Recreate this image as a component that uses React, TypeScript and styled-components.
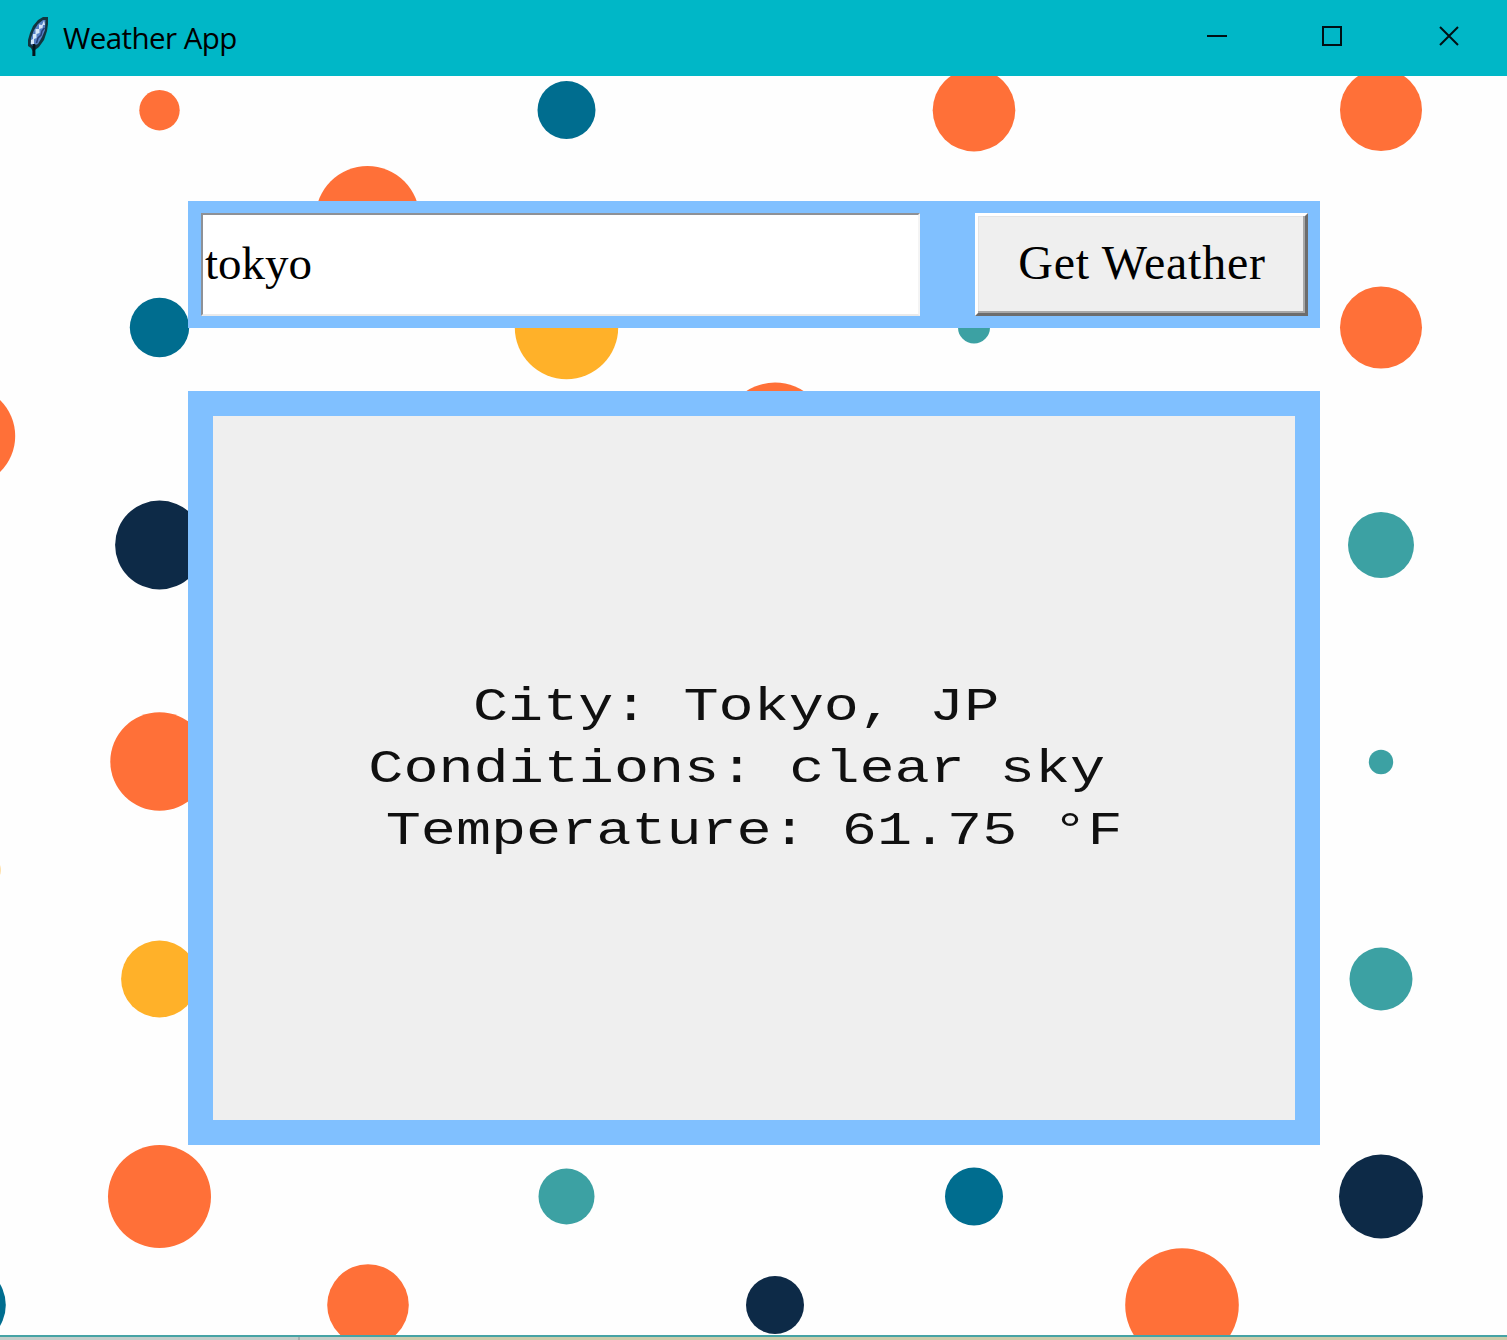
import React from 'react';
import styled, { createGlobalStyle } from 'styled-components';

const GlobalStyle = createGlobalStyle`
  *, *::before, *::after { box-sizing: border-box; }
  html, body { margin: 0; padding: 0; background: #fefefe; }
  body { overflow: hidden; }
`;

const Window = styled.div`
  display: flex;
  flex-direction: column;
  width: 1507px;
  height: 1340px;
  overflow: hidden;
`;

const TitleBar = styled.header`
  display: flex;
  align-items: center;
  flex: none;
  height: 76px;
  padding-left: 24px;
  background: #00b7c7;
`;

const FeatherIcon = styled.svg`
  flex: none;
  width: 27px;
  height: 44px;
  margin-right: 12px;
`;

const Title = styled.h1`
  flex: 1;
  margin: 0;
  font: 400 29.5px/40px 'Open Sans', 'Noto Sans', sans-serif;
  letter-spacing: -0.55px;
  color: #000;
`;

const WindowControls = styled.div`
  display: flex;
  align-self: stretch;
`;

const ControlButton = styled.button`
  display: flex;
  justify-content: center;
  width: 116px;
  padding: 25px 0 0;
  border: 0;
  background: transparent;
`;

const Glyph = styled.svg`
  width: 22px;
  height: 22px;
  fill: none;
  stroke: #001014;
  stroke-width: 2;
`;

const Canvas = styled.main`
  position: relative;
  display: flex;
  flex-direction: column;
  gap: 63px;
  flex: none;
  height: 1259px;
  padding: 125px 187px 0 188px;
  background: #fefefe;
`;

const DotPattern = styled.svg`
  position: absolute;
  inset: 0;
  width: 1507px;
  height: 1259px;
`;

const SearchFrame = styled.form`
  position: relative;
  display: flex;
  justify-content: space-between;
  flex: none;
  height: 127px;
  padding: 12px 12px 12px 13px;
  background: #80c0ff;
`;

const CityInput = styled.input`
  width: 719px;
  height: 103px;
  padding: 0 2px 3px;
  border: 2px solid;
  border-color: #8e9196 #f4f4f4 #eaeaea #8e9196;
  border-radius: 0;
  outline: 0;
  background: #fff;
  font: 400 47px 'Liberation Serif', 'Times New Roman', serif;
  color: #000;
`;

const WeatherButton = styled.button`
  width: 333px;
  height: 103px;
  padding: 0 0 4px 1px;
  border: 3px solid;
  border-color: #fff #6c6c6c #6c6c6c #fff;
  border-radius: 0;
  background: #efefef;
  box-shadow: inset -2px -2px #a8a8a8, inset 1px 1px #e4e4e4;
  font: 400 48px 'Liberation Serif', 'Times New Roman', serif;
  letter-spacing: 0.75px;
  white-space: nowrap;
  color: #000;
`;

const ResultFrame = styled.section`
  position: relative;
  display: flex;
  flex: none;
  height: 754px;
  padding: 25px;
  background: #80c0ff;
`;

const Result = styled.div`
  display: flex;
  flex: 1;
  flex-direction: column;
  align-items: center;
  justify-content: center;
  padding-top: 4px;
  background: #efefef;
`;

const ResultLine = styled.p`
  margin: 0;
  font: 400 47px/62.3px 'Liberation Mono', 'Courier New', monospace;
  white-space: pre;
  color: #101010;
  transform: scaleX(1.244);
`;

const BottomEdge = styled.footer`
  flex: none;
  height: 5px;
  border-top: 2px solid #45a3a5;
  background: linear-gradient(90deg, #c3cdca 0 298px, #a9b0af 298px 300px, #c6cdc8 300px 340px, #cccba9 410px);
`;

const orange = '#ff7038';
const blue = '#006d8f';
const navy = '#0d2a47';
const teal = '#3ca1a3';
const yellow = '#ffb129';

// [centre x, centre y, radius, colour], measured from the canvas's top left corner
const dots: [number, number, number, string][] = [
  [159.5, 34.2, 20.2, orange],
  [566.5, 34, 29, blue],
  [974, 34.2, 41.3, orange],
  [1381, 34, 41, orange],
  [367.5, 142, 52, orange],
  [159.5, 251.5, 29.7, blue],
  [566.5, 251.5, 51.7, yellow],
  [974, 251.5, 16, teal],
  [1381, 251.5, 41, orange],
  [775, 359, 52.4, orange],
  [-35, 360, 50.2, orange],
  [159.5, 469, 44.4, navy],
  [1381, 469, 33, teal],
  [159.5, 685.5, 49.2, orange],
  [1381, 686, 12.2, teal],
  [-35, 794, 35.4, yellow],
  [159.5, 903, 38.4, yellow],
  [1381, 903, 31.5, teal],
  [159.5, 1120.5, 51.5, orange],
  [566.5, 1120.5, 28, teal],
  [974, 1120.5, 29, blue],
  [1381, 1120.5, 42, navy],
  [-35, 1229, 40.8, blue],
  [368, 1229, 40.8, orange],
  [775, 1229, 29, navy],
  [1182, 1229, 56.8, orange],
];

export default function App() {
  return (
    <>
      <GlobalStyle />
      <Window>
        <TitleBar>
          <FeatherIcon viewBox="0 0 27 44" aria-hidden="true">
            <path d="M24 1H19L14 4 9 10 6 17 4 24V30L7 32 8.5 35V40H11V34L15 31 20 24 23 15 24 8Z" fill="#12353f" />
            <path d="M21.5 4H19L14 8 10 14 7 22 6.5 28 9 30 14 28 18 21 21 14Z" fill="#5580c4" />
            <path d="M20 4.5 18 9 15 8.5 15 13 11.5 13 11.5 18 9 18 9 23 7 24V28H10V23L12.5 22V18L15.5 17V13L18.5 12 19 9H21Z" fill="#d3e6f8" />
            <path d="M20.5 12 18 15 17 19 14 22 12.5 27" fill="none" stroke="#243f78" strokeWidth="1.5" />
            <path d="M10 28V40" stroke="#03151d" strokeWidth="2.8" />
          </FeatherIcon>
          <Title>Weather App</Title>
          <WindowControls>
            <ControlButton aria-label="Minimize">
              <Glyph viewBox="0 0 22 22"><path d="M1 11H21" /></Glyph>
            </ControlButton>
            <ControlButton aria-label="Maximize">
              <Glyph viewBox="0 0 22 22"><path d="M1 2H19V20H1Z" /></Glyph>
            </ControlButton>
            <ControlButton aria-label="Close">
              <Glyph viewBox="0 0 22 22"><path d="M2 2 20 20M20 2 2 20" /></Glyph>
            </ControlButton>
          </WindowControls>
        </TitleBar>
        <Canvas>
          <DotPattern viewBox="0 0 1507 1259" aria-hidden="true">
            {dots.map(([cx, cy, r, fill]) => (
              <circle key={`${cx}-${cy}`} cx={cx} cy={cy} r={r} fill={fill} />
            ))}
          </DotPattern>
          <SearchFrame onSubmit={(e) => e.preventDefault()}>
            <CityInput defaultValue="tokyo" aria-label="City" spellCheck={false} />
            <WeatherButton type="submit">Get Weather</WeatherButton>
          </SearchFrame>
          <ResultFrame>
            <Result>
              <ResultLine>{'City: Tokyo, JP '}</ResultLine>
              <ResultLine>{'Conditions: clear sky '}</ResultLine>
              <ResultLine>{'Temperature: 61.75 °F'}</ResultLine>
            </Result>
          </ResultFrame>
        </Canvas>
        <BottomEdge />
      </Window>
    </>
  );
}
